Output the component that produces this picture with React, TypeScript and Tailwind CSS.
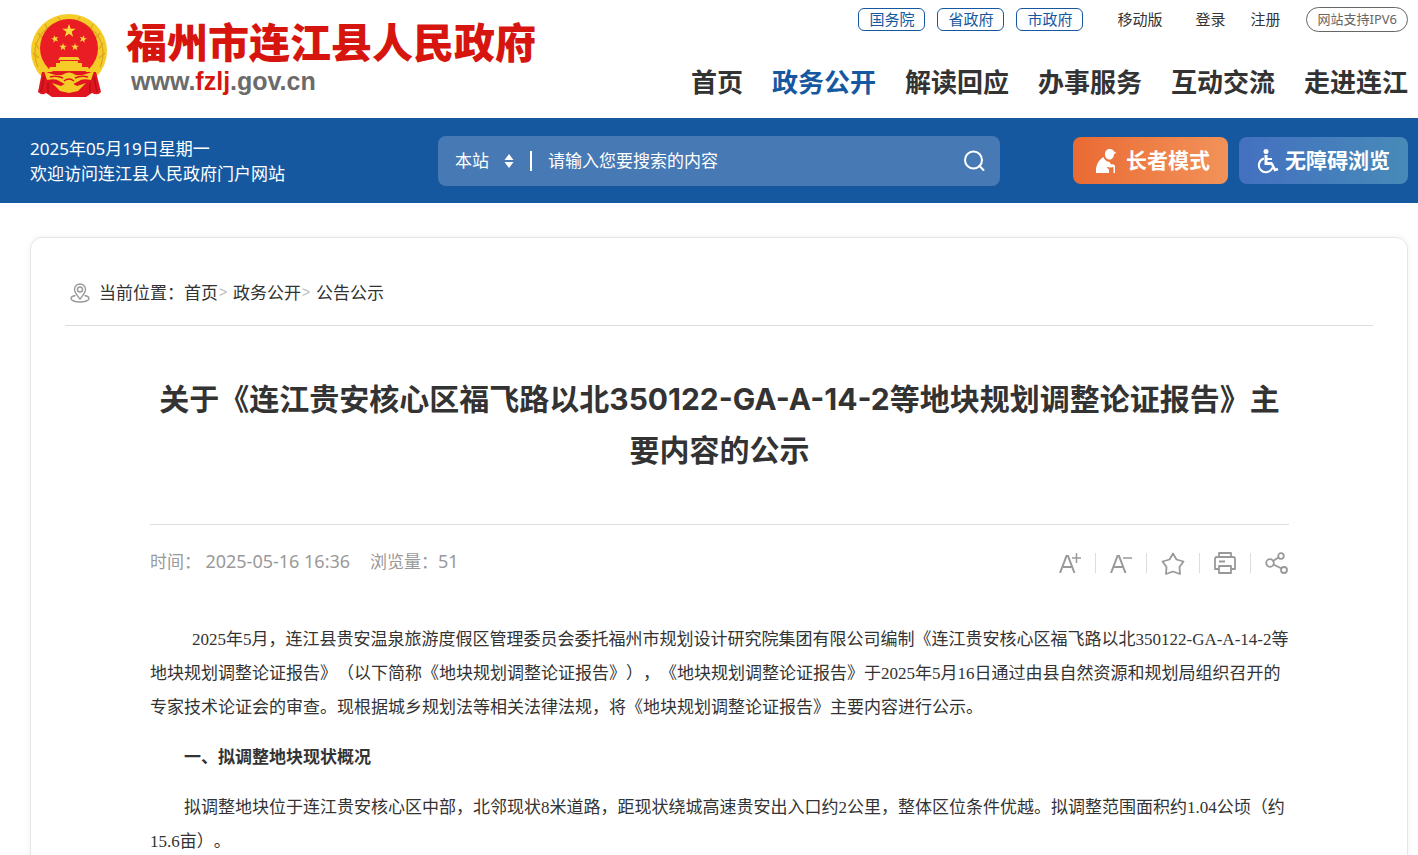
import React, { useState } from 'react';

const GOV_LINKS = ['国务院', '省政府', '市政府'];

const NAV_ITEMS = ['首页', '政务公开', '解读回应', '办事服务', '互动交流', '走进连江'];

const CRUMBS = ['首页', '政务公开', '公告公示'];

const SANS = "font-['Noto_Sans','Noto_Sans_CJK_SC',sans-serif]";

const Star: React.FC<{ x: number; y: number; r: number; rotate?: number }> = ({ x, y, r, rotate = 0 }) => (
  <polygon
    points="0,-10 2.4,-3.2 9.5,-3.1 3.8,1.2 5.9,8.1 0,4 -5.9,8.1 -3.8,1.2 -9.5,-3.1 -2.4,-3.2"
    transform={`translate(${x} ${y}) rotate(${rotate}) scale(${r / 10})`}
    fill="#f9dc3c"
  />
);

const Emblem: React.FC = () => (
  <svg width="78" height="84" viewBox="0 0 78 84" aria-label="国徽">
    <ellipse cx="39" cy="38" rx="38" ry="37" fill="#f5cb27" />
    <path d="M8 54 A34 33 0 1 1 70 54" fill="none" stroke="#d9a520" strokeWidth="1.200" />
    <path d="M5 30 L9 36 M3 40 L9 45 M8 20 L13 26 M15 11 L18 17 M73 30 L69 36 M75 40 L69 45 M70 20 L65 26 M63 11 L60 17 M28 4 L31 8 M50 4 L47 8" stroke="#d9a520" strokeWidth="1.200" />
    <circle cx="39" cy="35" r="29" fill="#ea1c24" />
    <path d="M12 59 H66 L71 79 Q68 83 62 80 L56 84 H22 L16 80 Q12 83 8 79 Z" fill="#e1151f" />
    <Star x={39} y={18} r={7} />
    <Star x={25} y={26} r={4} rotate={-15} />
    <Star x={53} y={26} r={4} rotate={15} />
    <Star x={33} y={34} r={4} />
    <Star x={45} y={34} r={4} />
    <path d="M30 44 H48 L50 47 H28 Z M30 48 H48 V50 H52 V54 H26 V50 H30 Z M20 54 H58 L60 58 H18 Z" fill="#f5cb27" />
    <path d="M14 58 Q24 63 32 62 Q39 57 46 62 Q54 63 64 58 L61 67 Q52 65 49 68 Q39 75 29 68 Q26 65 17 67 Z" fill="#f5cb27" />
    <path d="M22 70 L31 73 Q39 67 47 73 L56 70 L48 78 L39 80 L30 78 Z" fill="#f5cb27" />
    <path d="M20 64 Q27 62 33 65 M58 64 Q51 62 45 65 M34 68 Q39 64 44 68" fill="none" stroke="#e1151f" strokeWidth="1.500" />
    <path d="M14 64 L11 79 M64 64 L67 79 M18 70 L18 80 M60 70 L60 80" stroke="#b50f18" strokeWidth="1.500" />
  </svg>
);

const App: React.FC = () => {
  const [keyword, setKeyword] = useState('');
  const [large, setLarge] = useState(false);

  return (
    <div className={`min-h-screen bg-white text-[#333] [text-spacing-trim:space-all] ${SANS}`}>
      <header className="flex h-[118px] justify-between pl-[30px] pr-[10px]">
        <a href="#" className="flex items-start pt-[13px]">
          <Emblem />
          <span className="ml-[18px] flex flex-col pt-[9px] font-['Liberation_Sans','Noto_Sans_CJK_SC',sans-serif]">
            <span className="text-[41px] font-black leading-[44px] text-[#d7150f]">福州市连江县人民政府</span>
            <span className="ml-[5px] text-[25px] font-bold leading-[30px] text-[#6b6b6b]">
              www.<span className="text-[#d7150f]">fzlj</span>.gov.cn
            </span>
          </span>
        </a>
        <div className="flex flex-col items-end pt-[7px]">
          <div className="flex items-center text-[15px] leading-[21px]">
            <div className="flex gap-3 text-[#15589f]">
              {GOV_LINKS.map(name => (
                <a key={name} href="#" className="rounded-md border border-[#15589f] px-[10px]">{name}</a>
              ))}
            </div>
            <a href="#" className="ml-[34px]">移动版</a>
            <a href="#" className="ml-[33px]">登录</a>
            <a href="#" className="ml-[25px]">注册</a>
            <a href="#" className="ml-[26px] rounded-full border border-[#666] px-[10px] text-[13px] leading-[23px] text-[#666]">网站支持IPV6</a>
          </div>
          <nav className="mt-[31px] flex gap-[29px] text-[26px] font-bold leading-[38px]">
            {NAV_ITEMS.map(item => (
              <a key={item} href="#" className={item === '政务公开' ? 'text-[#15589f]' : ''}>{item}</a>
            ))}
          </nav>
        </div>
      </header>

      <div className="flex h-[85px] items-center justify-between bg-[#15589f] pl-[30px] pr-[10px] text-white">
        <p className="w-[408px] text-[17px] leading-[25px]">
          2025年05月19日星期一<br />欢迎访问连江县人民政府门户网站
        </p>
        <form className="flex h-[50px] max-w-[562px] flex-1 items-center rounded-lg bg-[#477ab4] pl-[17px] pr-[14px] text-[17px]" onSubmit={e => e.preventDefault()}>
          <div className="relative flex items-center">
            <select aria-label="搜索范围" className="w-[60px] appearance-none bg-transparent">
              <option>本站</option>
            </select>
            <svg className="pointer-events-none absolute right-0" width="12" height="14" viewBox="0 0 12 14" fill="#fff">
              <path d="M6 0 L10.500 6 H1.500 Z M6 14 L10.500 8 H1.500 Z" />
            </svg>
          </div>
          <span className="ml-[15px] h-5 w-[2px] bg-white" />
          <input
            aria-label="搜索"
            value={keyword}
            onChange={e => setKeyword(e.target.value)}
            placeholder="请输入您要搜索的内容"
            className="ml-4 min-w-0 flex-1 bg-transparent outline-none placeholder:text-white"
          />
          <button type="submit" aria-label="搜索">
            <svg width="24" height="24" viewBox="0 0 24 24" fill="none" stroke="#fff" strokeWidth="2">
              <circle cx="11.500" cy="11" r="8.500" />
              <path d="M17.500 17 L21.500 21" strokeLinecap="round" />
            </svg>
          </button>
        </form>
        <div className="ml-[73px] flex gap-[11px] text-[21px] font-bold">
          <button className="flex h-[47px] w-[155px] items-center justify-end gap-2 rounded-lg bg-linear-to-r from-[#ea6a33] to-[#f19259] pr-[18px]">
            <svg width="24" height="26" viewBox="0 0 24 26" fill="#fff">
              <path d="M11 6 C11 3 13 1 16 1 C18 1 19.500 2 20 3.500 L22.500 5 L20 6 C20 9.500 18 11.500 15.500 11.500 C12.500 11.500 11 9 11 6 Z" />
              <path d="M9.500 9 C10.500 12 12.500 13.500 15.500 14 L17 16.500 C20 16 21 17 21 19 V25 H19.500 V19.500 C19 18.500 18 19 17 19.500 L12.500 19 L15 21.500 V25 H2 C1.500 17 4.500 12 9.500 9 Z" />
            </svg>
            长者模式
          </button>
          <button className="flex h-[47px] w-[169px] items-center justify-end gap-[6px] rounded-lg bg-linear-to-r from-[#4470c0] to-[#478ab8] pr-[18px]">
            <svg width="22" height="26" viewBox="0 0 22 26" fill="none" stroke="#fff" strokeWidth="2">
              <circle cx="9" cy="3.500" r="2.500" fill="#fff" stroke="none" />
              <path d="M9 7 V15.500 H15" strokeWidth="3" />
              <path d="M14.500 15 L18 22 L21 21" strokeWidth="2.500" />
              <path d="M9 11 H15" />
              <path d="M7 10.500 A7 7 0 1 0 15.500 19.500" />
            </svg>
            无障碍浏览
          </button>
        </div>
      </div>

      <main className="ml-[30px] mr-[10px] mt-[34px] rounded-xl border border-[#e6e6e6] px-[34px] pb-20 shadow-[0_0_6px_rgba(0,0,0,0.06)]">
        <nav className="flex h-[88px] items-center border-b border-[#ddd] pl-[5px] pt-[22px] text-[17px]">
          <svg className="mr-[9px]" width="20" height="20" viewBox="0 0 20 20" fill="none" stroke="#999" strokeWidth="1.400">
            <path d="M10 16 C7 12 4.500 9.500 4.500 6.500 A5.500 5.500 0 0 1 15.500 6.500 C15.500 9.500 13 12 10 16 Z" />
            <circle cx="10" cy="6.500" r="2.500" />
            <path d="M5.500 12.500 C2.500 13 1 14 1 15.500 C1 17.500 5 19 10 19 S19 17.500 19 15.500 C19 14 17.500 13 14.500 12.500" />
          </svg>
          <span>当前位置：</span>
          {CRUMBS.map((crumb, i) => (
            <React.Fragment key={crumb}>
              {i > 0 && <span className="w-[15px] pl-px font-['Liberation_Sans',sans-serif] text-[14px] text-[#bbb]">&gt;</span>}
              <a href="#">{crumb}</a>
            </React.Fragment>
          ))}
        </nav>

        <article className="pl-[85px] pr-[84px]">
          <h1 className="pb-[48px] pt-[48px] text-center font-['Inter','Noto_Sans_CJK_SC',sans-serif] text-[30px] font-bold leading-[51px]">
            关于《连江贵安核心区福飞路以北350122-GA-A-14-2等地块规划调整论证报告》主要内容的公示
          </h1>
          <div className="flex items-center justify-between border-t border-[#ddd] pt-[22px] text-[17px] leading-[30px] text-[#999]">
            <p>
              <span>时间： </span>
              <span className="text-[18px] leading-none">2025-05-16 16:36</span>
              <span className="ml-5">浏览量：</span>
              <span className="text-[18px] leading-none">51</span>
            </p>
            <div className="flex items-center divide-x divide-[#ddd] pr-px pt-[2px]">
              <button aria-label="放大字体" className="h-5 pr-[14px]" onClick={() => setLarge(true)}>
                <svg width="22" height="20" viewBox="0 0 22 20" fill="none" stroke="#999" strokeWidth="2">
                  <path d="M1 20 L7.500 3 H9 L15.500 20 M4 14 H13" />
                  <path d="M13 5 H22 M17.500 0 V10" strokeWidth="1.500" />
                </svg>
              </button>
              <button aria-label="缩小字体" className="h-5 px-[14px]" onClick={() => setLarge(false)}>
                <svg width="22" height="20" viewBox="0 0 22 20" fill="none" stroke="#999" strokeWidth="2">
                  <path d="M1 20 L7.500 3 H9 L15.500 20 M4 14 H13" />
                  <path d="M13 5 H22" strokeWidth="1.500" />
                </svg>
              </button>
              <button aria-label="收藏" className="flex h-5 items-center px-[14px]">
                <svg width="24" height="24" viewBox="0 0 24 24" fill="none" stroke="#999" strokeWidth="1.800" strokeLinejoin="round">
                  <path d="M12 2.500 L15.500 8.500 L22.500 10.500 L18.500 16 L19 23 L12 20.500 L5 23 L5.500 16 L1.500 10.500 L8.500 8.500 Z" />
                </svg>
              </button>
              <button aria-label="打印" className="flex h-5 items-center px-[14px]">
                <svg width="22" height="22" viewBox="0 0 22 22" fill="none" stroke="#999" strokeWidth="1.800" strokeLinejoin="round">
                  <path d="M5 5 V1 H17 V5 M5 17 H1 V7 Q1 5 3 5 H19 Q21 5 21 7 V17 H17 M5 14 H17 V21 H5 Z M5 9.500 H11" />
                </svg>
              </button>
              <button aria-label="分享" className="flex h-5 items-center pl-[14px]">
                <svg width="23" height="22" viewBox="0 0 23 22" fill="none" stroke="#999" strokeWidth="1.800">
                  <circle cx="5" cy="11" r="3.800" />
                  <circle cx="16" cy="4" r="2.800" />
                  <circle cx="19" cy="18" r="3" />
                  <path d="M8 9 L13.500 5.500 M8.500 12.500 L16.500 16.500" />
                </svg>
              </button>
            </div>
          </div>

          <div className={`mt-[46px] space-y-4 font-['Liberation_Serif','Noto_Sans_CJK_SC',serif] leading-[34px] ${large ? 'text-[20px]' : 'text-[17px]'}`}>
            <p className="indent-[42px]">
              2025年5月，连江县贵安温泉旅游度假区管理委员会委托福州市规划设计研究院集团有限公司编制《连江贵安核心区福飞路以北350122-GA-A-14-2等地块规划调整论证报告》（以下简称《地块规划调整论证报告》），《地块规划调整论证报告》于2025年5月16日通过由县自然资源和规划局组织召开的专家技术论证会的审查。现根据城乡规划法等相关法律法规，将《地块规划调整论证报告》主要内容进行公示。
            </p>
            <p className="indent-[34px] font-bold">一、拟调整地块现状概况</p>
            <p className="indent-[34px]">
              拟调整地块位于连江贵安核心区中部，北邻现状8米道路，距现状绕城高速贵安出入口约2公里，整体区位条件优越。拟调整范围面积约1.04公顷（约15.6亩）。
            </p>
          </div>
        </article>
      </main>
    </div>
  );
};

export default App;
